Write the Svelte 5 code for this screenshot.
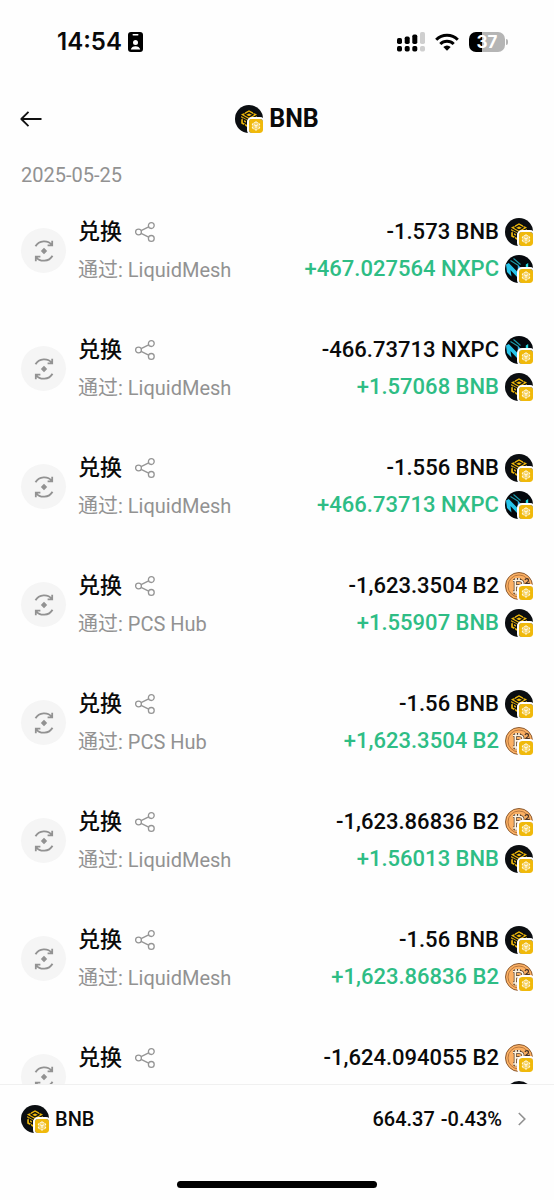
<script lang="ts">
  type Token = 'BNB' | 'NXPC' | 'B2';

  interface Swap {
    via: string;
    out: string;
    outToken: Token;
    received: string;
    receivedToken: Token;
  }

  const swaps: Swap[] = [
    { via: 'LiquidMesh', out: '-1.573', outToken: 'BNB', received: '+467.027564', receivedToken: 'NXPC' },
    { via: 'LiquidMesh', out: '-466.73713', outToken: 'NXPC', received: '+1.57068', receivedToken: 'BNB' },
    { via: 'LiquidMesh', out: '-1.556', outToken: 'BNB', received: '+466.73713', receivedToken: 'NXPC' },
    { via: 'PCS Hub', out: '-1,623.3504', outToken: 'B2', received: '+1.55907', receivedToken: 'BNB' },
    { via: 'PCS Hub', out: '-1.56', outToken: 'BNB', received: '+1,623.3504', receivedToken: 'B2' },
    { via: 'LiquidMesh', out: '-1,623.86836', outToken: 'B2', received: '+1.56013', receivedToken: 'BNB' },
    { via: 'LiquidMesh', out: '-1.56', outToken: 'BNB', received: '+1,623.86836', receivedToken: 'B2' },
    { via: '', out: '-1,624.094055', outToken: 'B2', received: '', receivedToken: 'BNB' },
  ];
</script>

{#snippet coin(token: Token)}
  <span class="coin">
    <svg class="coin-face" viewBox="0 0 28 28" aria-hidden="true">
      {#if token === 'BNB'}
        <circle cx="14" cy="14" r="14" fill="#0b0e11" />
        <path d="m14 5.200 7.800 4.300v9L14 23l-7.800-4.500v-9z" fill="#f0b90b" />
        <g fill="none" stroke="#0b0e11" stroke-width="1.300">
          <path d="m6 10.300 8 4.600 8-4.600M14 14.900V23" />
          <path d="m10 9.800 4-2.200 4 2.200-4 2.200zM9.200 5.500v3M18.800 5.500v3" />
          <path d="M8.500 14v3.200l3 1.700v-3.200zM16.500 15.700l3.200-1.800v3.300M5.500 13.500h2M9.500 21.800v-2.500" />
        </g>
      {:else if token === 'NXPC'}
        <circle cx="14" cy="14" r="14" fill="#05080c" />
        <path d="M1 9.500 3.800 8l8.700 9v5.500L5.500 15l1 6.500L2 17z" fill="#27c4ea" />
        <path d="M12.800 9.500 21 18.500v3.500l-5.700-6v5h-2.500z" fill="#35aee8" />
        <path d="M20.800 9.500 23.200 8v7h-2.400z" fill="#28dbe0" />
        <path d="m5.500 5.500 8 5M8.500 3.500l7 6" stroke="#1d9cac" stroke-width="1.100" />
      {:else}
        <circle cx="14" cy="14" r="13.500" fill="#fbb063" stroke="#8a5a32" />
        <circle cx="14" cy="14" r="11" fill="none" stroke="#b87840" stroke-width="1" />
        <g fill="none">
          <path
            d="M8 8.500h6.200c4.800 0 4.800 5.300.8 5.300 4.800 0 5 6.200 0 6.200H8M10.300 8.500V20M10.300 13.800h4.500M11 6v2.500M14 6v2.500M11 20v2.500M14 20v2.500"
            stroke="#4c3627"
            stroke-width="3"
          />
          <path
            d="M8 8.500h6.200c4.800 0 4.800 5.300.8 5.300 4.800 0 5 6.200 0 6.200H8M10.300 8.500V20M10.300 13.800h4.500M11 6v2.500M14 6v2.500M11 20v2.500M14 20v2.500"
            stroke="#fff3df"
            stroke-width="1.700"
          />
          <path d="M20 8.200c.5-2.400 4-2 3.500.4-.3 1.200-1.600 1.800-2.800 3h4" stroke="#4c3627" stroke-width="1.200" />
        </g>
      {/if}
    </svg>
    <svg class="coin-chain" viewBox="0 0 14 14" aria-hidden="true">
      <path d="m7 2.600 3.800 2.100v4.500L7 11.400 3.200 9.200V4.700z" fill="#fff" fill-opacity=".4" />
      <path
        d="M5.200 3.800 7 2.800l1.800 1M3.400 6.200V4.900l1-.6M10.600 6.200V4.900l-1-.6M5 5.700l2 1.200 2-1.200M7 7v2M3.400 7.800v1.300l1.200.7M10.600 7.800v1.300l-1.200.7M5.800 10.500l1.200.7 1.200-.7"
        fill="none"
        stroke="#fff"
        stroke-width=".9"
      />
    </svg>
  </span>
{/snippet}

<div class="screen">
  <div class="status-bar">
    <div class="status-left">
      <span class="clock">14:54</span>
      <svg width="15" height="20" viewBox="0 0 15 20" aria-hidden="true">
        <rect width="15" height="20" rx="3" />
        <rect x="4.500" y="2" width="6" height="1.500" rx=".7" fill="#fff" />
        <circle cx="7.500" cy="10.500" r="2.500" fill="#fff" />
        <path d="M2.800 17.600c.5-4.600 8.900-4.600 9.400 0z" fill="#fff" />
      </svg>
    </div>
    <div class="status-right">
      <svg width="28" height="20" viewBox="0 0 28 20" aria-hidden="true">
        <rect x="0" y="6" width="5" height="6" rx="1.700" />
        <rect x="7.700" y="4.500" width="5" height="7.500" rx="1.700" />
        <rect x="15.300" y="2.500" width="5" height="9.500" rx="1.700" />
        <rect x="23" y="0" width="5" height="12" rx="1.700" fill="#cfcfcf" />
        <rect x="0" y="14" width="5" height="5.500" rx="1.700" />
        <rect x="7.700" y="14" width="5" height="5.500" rx="1.700" />
        <rect x="15.300" y="14" width="5" height="5.500" rx="1.700" />
        <rect x="23" y="14" width="5" height="5.500" rx="1.700" fill="#cfcfcf" />
      </svg>
      <svg width="24" height="18" viewBox="0 0 24 18" aria-hidden="true">
        <g fill="none" stroke="#000" stroke-width="3">
          <path d="M1.200 6.800a15.300 15.300 0 0 1 21.600 0" />
          <path d="M5.300 11a9.500 9.500 0 0 1 13.400 0" />
        </g>
        <path d="M8.300 14a5.300 5.300 0 0 1 7.400 0L12 17.800z" />
      </svg>
      <div class="battery">
        <span class="battery-level">37</span>
        <span class="battery-cap"></span>
      </div>
    </div>
  </div>

  <header class="header">
    <button type="button" class="back" aria-label="返回">
      <svg width="22" height="16" viewBox="0 0 22 16" fill="none" stroke="#111" stroke-width="1.800" aria-hidden="true">
        <path d="M8.500.8 1.300 8l7.200 7.200M1.300 8h20.200" stroke-linejoin="round" />
      </svg>
    </button>
    <h1 class="title">
      {@render coin('BNB')}
      <span>BNB</span>
    </h1>
  </header>

  <main class="history">
    <h2 class="date">2025-05-25</h2>
    <ul class="swap-list">
      {#each swaps as swap}
        <li class="swap">
          <span class="swap-icon">
            <svg width="20" height="22" viewBox="0 0 20 22" fill="none" stroke="#929292" stroke-width="1.800" aria-hidden="true">
              <path d="M1.500 6.300C5 0 14-.2 17.800 4.800M18.200.8v4.600h-4.600" />
              <path d="M18.500 15.700C15 22 6 22.200 2.200 17.200M1.800 21.200v-4.600h4.600" />
              <path d="m10 7.800 3.200 3.200-3.200 3.200L6.800 11z" fill="#929292" stroke="none" />
            </svg>
          </span>
          <div class="swap-info">
            <div class="swap-name">
              兑换
              <button type="button" class="share" aria-label="分享">
                <svg width="20" height="20" viewBox="0 0 20 20" fill="none" stroke="#959595" stroke-width="1.300" aria-hidden="true">
                  <circle cx="3.500" cy="10" r="2.900" />
                  <circle cx="16.300" cy="3.600" r="2.900" />
                  <circle cx="16.300" cy="16.400" r="2.900" />
                  <path d="m6.100 8.700 7.600-3.800M6.100 11.300l7.600 3.800" />
                </svg>
              </button>
            </div>
            <div class="swap-via">
              {#if swap.via}通过: {swap.via}{/if}
            </div>
          </div>
          <div class="swap-amounts">
            <div class="amount">{swap.out} {swap.outToken} {@render coin(swap.outToken)}</div>
            <div class="amount received">
              {#if swap.received}{swap.received} {swap.receivedToken}{/if}
              {@render coin(swap.receivedToken)}
            </div>
          </div>
        </li>
      {/each}
    </ul>
  </main>

  <footer class="footer">
    <a class="quote" href="#bnb">
      {@render coin('BNB')}
      <span class="quote-name">BNB</span>
      <span class="quote-price">664.37</span>
      <span class="quote-change">-0.43%</span>
      <svg width="8" height="14" viewBox="0 0 8 14" fill="none" stroke="#909090" stroke-width="1.600" aria-hidden="true">
        <path d="m.8 1 6 6-6 6" />
      </svg>
    </a>
    <div class="home-indicator"></div>
  </footer>
</div>

<style>
  :global(body) {
    background: #fff;
  }

  .screen {
    display: flex;
    flex-direction: column;
    height: 100vh;
    overflow: hidden;
    background: #fefefe;
    color: #0a0a0a;
    font-family: Roboto, 'Noto Sans CJK SC', sans-serif;
  }

  button {
    display: flex;
    padding: 0;
    border: 0;
    background: none;
    cursor: pointer;
  }

  svg {
    display: block;
    flex: none;
  }

  .status-bar {
    display: flex;
    flex: none;
    align-items: center;
    justify-content: space-between;
    height: 84px;
    padding: 0 46px 0 57px;
    box-sizing: border-box;
  }

  .status-left {
    display: flex;
    align-items: center;
    gap: 6px;
  }

  .clock {
    font-family: Inter, sans-serif;
    font-size: 24px;
    font-weight: 600;
    line-height: 28px;
  }

  .status-right {
    display: flex;
    align-items: center;
    gap: 10px;
  }

  .battery {
    display: flex;
    align-items: center;
    gap: 1px;
  }

  .battery-level {
    width: 36px;
    border-radius: 7px;
    background: linear-gradient(to right, #000 37%, #b5b5b5 37%);
    color: #fff;
    font-family: Inter, sans-serif;
    font-size: 17px;
    font-weight: 700;
    line-height: 20px;
    text-align: center;
  }

  .battery-cap {
    width: 2px;
    height: 6px;
    border-radius: 0 2px 2px 0;
    background: #b5b5b5;
  }

  .header {
    display: grid;
    flex: none;
    grid-template-columns: 1fr auto 1fr;
    align-items: center;
    height: 70px;
    padding: 0 20px;
  }

  .title {
    display: flex;
    align-items: center;
    gap: 6px;
    margin: 0;
    font-size: 25px;
    font-weight: 700;
    line-height: 30px;
  }

  .coin {
    position: relative;
    flex: none;
    width: 28px;
    height: 28px;
  }

  .coin-face {
    width: 28px;
    height: 28px;
  }

  .coin-chain {
    position: absolute;
    right: -2px;
    bottom: -2px;
    width: 14px;
    height: 14px;
    border: 2px solid #fefefe;
    border-radius: 5px;
    background: #f0b90b;
    background-clip: padding-box;
  }

  .history {
    flex: 1;
    min-height: 0;
    overflow: hidden;
  }

  .date {
    margin: 0;
    padding: 0 21px;
    color: #929292;
    font-size: 20px;
    font-weight: 400;
    line-height: 43px;
  }

  .swap-list {
    margin: 0;
    padding: 0;
    list-style: none;
  }

  .swap {
    display: flex;
    align-items: flex-start;
    height: 65px;
    padding: 21px 21px 32px;
  }

  .swap-icon {
    display: flex;
    flex: none;
    align-items: center;
    justify-content: center;
    width: 45px;
    height: 45px;
    margin: 10px 12px 10px 0;
    border-radius: 50%;
    background: #f5f5f5;
  }

  .swap-info,
  .swap-amounts {
    display: flex;
    flex-direction: column;
    gap: 9px;
  }

  .swap-info {
    flex: 1;
    gap: 10px;
  }

  .swap-name {
    display: flex;
    align-items: center;
    gap: 13px;
    font-size: 22px;
    font-weight: 500;
    line-height: 28px;
  }

  .swap-via {
    color: #929292;
    font-size: 20px;
    line-height: 28px;
  }

  .amount {
    display: flex;
    align-items: center;
    justify-content: flex-end;
    gap: 6px;
    font-size: 22px;
    font-weight: 500;
    line-height: 28px;
    white-space: nowrap;
  }

  .received {
    color: #2ebd85;
  }

  .footer {
    flex: none;
    border-top: 1px solid #f0f0f0;
    background: #fefefe;
  }

  .quote {
    display: flex;
    align-items: center;
    height: 67px;
    padding: 0 28px 0 21px;
    color: inherit;
    font-size: 20px;
    font-weight: 500;
    text-decoration: none;
  }

  .quote-name {
    flex: 1;
    margin-left: 6px;
  }

  .quote-change {
    margin: 0 16px 0 6px;
  }

  .home-indicator {
    width: 36%;
    height: 7px;
    margin: 29px auto 12px;
    border-radius: 4px;
    background: #000;
  }
</style>
